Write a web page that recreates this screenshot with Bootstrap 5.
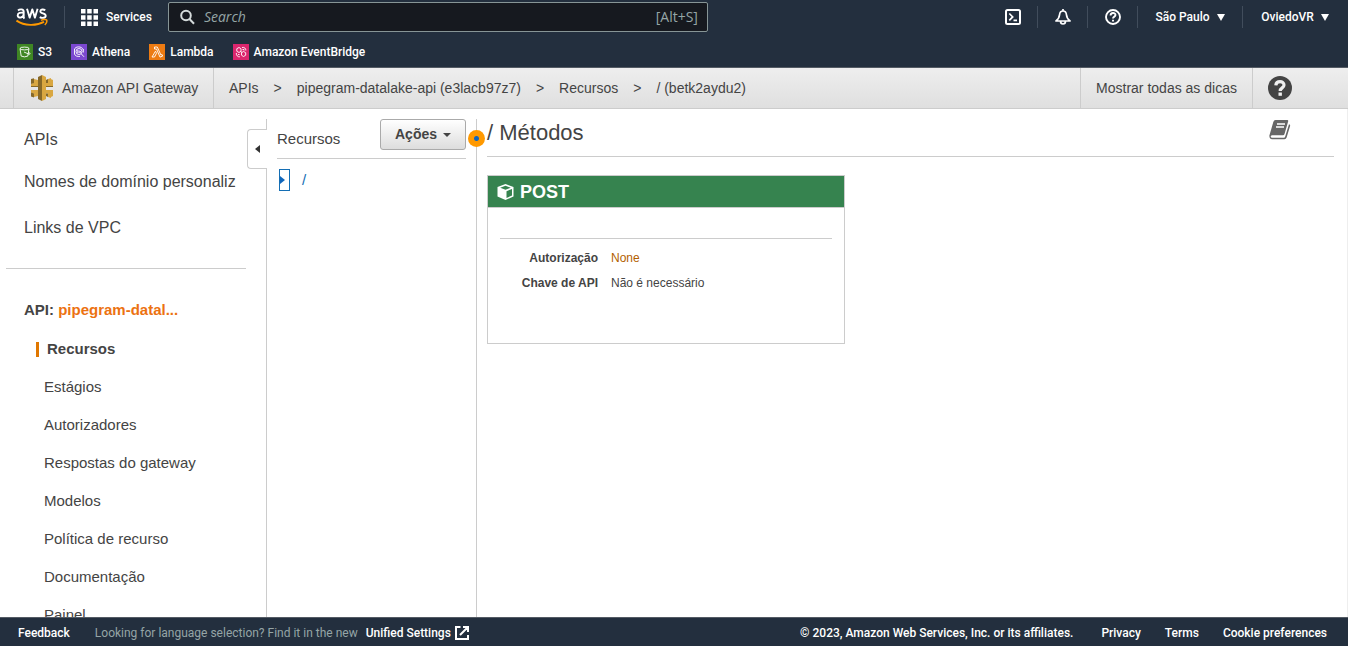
<!DOCTYPE html>
<html lang="pt-BR">
<head>
<meta charset="utf-8">
<meta name="viewport" content="width=device-width, initial-scale=1">
<title>API Gateway</title>
<link href="https://cdn.jsdelivr.net/npm/bootstrap@5.3.0/dist/css/bootstrap.min.css" rel="stylesheet">
<style>
body{font-family:"Liberation Sans",Arial,sans-serif;font-size:15px;line-height:20px;color:#444;background:#fff}
a{color:inherit;text-decoration:none}
.aws-bar{background:#232f3e;color:#fff;font:500 12px/16px Roboto,"Open Sans",sans-serif}
.aws-bar .btn{font:inherit;color:inherit;border:0;border-radius:0;padding:0}
.top-bar{border-bottom:1px solid #545b64}
.top-row{height:34px;padding-right:1px}
.fav-row{height:33px;padding:2px 0 0 17px;gap:19px}
.fav-row a{gap:5px}
.logo-cell{width:64px;padding-left:16px;padding-bottom:2px}
.vr-line{width:1px;height:22px;background:#414d5c}
.search-box{width:540px;height:30px;background:#16191f;border:1px solid #879596;border-radius:2px;color:#95a5a6;font:14px/16px "Open Sans",sans-serif;padding:0 9px 0 11px;gap:9px}
.search-box input{background:none;border:0;outline:0;font:inherit;font-style:italic;padding:0;color:inherit;min-width:0}
.search-box input::placeholder{color:#95a5a6;opacity:1}
.search-box kbd{background:none;color:inherit;font:inherit;padding:0}
.cell-icon{width:49px}
.region-btn{width:104px}
.user-btn{width:104px}
.top-bar .caret{width:0;height:0;border:4px solid transparent;border-top:7px solid #fff;border-bottom:0;margin-left:7px}
.crumb-bar{height:41px;font-size:14px;background:linear-gradient(#eee,#dfdfdf);border-bottom:1px solid #ccc;padding-left:13px}
.svc-cell{width:201px;border:1px solid #ccc;border-width:0 1px;padding-left:15px;gap:7px}
.crumbs{padding-left:15px;gap:15px}
.tips-cell{border:1px solid #ccc;border-width:0 1px;width:173px}
.help-cell{width:95px;padding-left:15px}
.work-area{border-right:1px solid #eee;padding-top:10px}
.side-col{width:267px;border-right:1px solid #ccc;padding-left:6px;position:relative}
.side-links a{display:block;font-size:16px;height:20px;padding-left:18px;width:230px;overflow:hidden;white-space:nowrap}
.side-links{padding:11px 0 30px;width:240px;border-bottom:1px solid #ccc}
.side-links li + li{margin-top:22px}
.side-links li + li + li{margin-top:26px}
.api-name{padding:31px 0 0 18px;font-weight:bold}
.api-name a{color:#ec7211}
.api-nav{padding:19px 0 0 38px}
.api-nav li{height:20px;margin-bottom:18px}
.api-nav .here{font-weight:bold;border-left:3px solid #e07700;height:15px;line-height:14px;margin:3px 0 20px -8px;padding-left:8px}
.fold-tab{position:absolute;right:-1px;top:10px;width:20px;height:40px;background:#fff;border:1px solid #ccc;border-right:0;border-radius:4px 0 0 4px;padding:0}
.tree-col{width:210px;border-right:1px solid #ccc;position:relative;padding:0 10px}
.tree-head{height:40px;border-bottom:1px solid #ccc}
.act-btn{width:86px;height:31px;font-size:14px;font-weight:bold;line-height:16px;color:#444;border:1px solid #aaa;border-radius:3px;background:linear-gradient(#fff,#ddd);padding:0 0 2px}
.act-btn::after{margin-left:6px;vertical-align:2px;border-top-width:4px;border-left-width:4px;border-right-width:4px}
.tree-row{padding:10px 0 0 2px;gap:12px;color:#146eb4}
.tree-toggle{width:11px;height:22px;border:1px solid #146eb4;background:#fff;padding:0;display:flex;align-items:center}
.split-dot{position:absolute;right:-9px;top:11px;width:17px;height:17px;border-radius:50%;border:0;padding:0;background:radial-gradient(circle,#1166bb 0 2px,#ff9900 3px)}
.detail-col{padding:0 13px 0 10px}
.detail-head{height:38px;border-bottom:1px solid #ccc;padding:1px 43px 0 0}
.detail-head h1{font-size:22px;line-height:26px;margin:0;font-weight:normal}
.method-box{width:358px;height:169px;margin-top:18px;border:1px solid #ccc}
.method-box h2{margin:0;height:32px;background:#36834f;border-bottom:1px solid #ccc;color:#fff;font-size:18px;line-height:20px;font-weight:bold;padding-left:9px;gap:6px}
.method-info{margin:30px 12px 0;border-top:1px solid #ccc;padding-top:7px;font-size:12px;line-height:25px}
.method-info th{width:98px;text-align:right;padding:0}
.method-info td{padding:0 0 0 13px}
.method-info a{color:#b35f00}
.foot-bar{height:29px;border-top:1px solid #545b64;padding:1px 21px 0 18px}
.foot-note{font-weight:400;color:#95a5a6;margin-left:25px}
</style>
</head>
<body class="vh-100 d-flex flex-column overflow-hidden">
<header class="aws-bar top-bar flex-shrink-0">
  <div class="top-row d-flex align-items-center">
    <div class="logo-cell"><a href="#" aria-label="AWS">
      <svg width="32" height="21" viewBox="0 0 32 21" fill="none" class="d-block">
        <g stroke="#fff" stroke-width="1.9"><path d="M2 4.5C3.6 3 7.7 2.6 7.7 5.8V11q0 .8.7 1.6M7.6 6.8C4.7 6.2 1.7 6.8 1.7 9.400 1.700 12.600 7.600 12.400 7.700 8"/><path d="M11 2.800 13.700 11.600 16.300 3.400 18.900 11.600 21.600 2.800" stroke-linejoin="round"/><path d="M29.300 4.200C27.400 3 24.300 3.100 24.300 5.300 24.300 8 29.700 6.900 29.700 9.700 29.700 12.200 26 12.300 23.700 11.100"/></g>
        <path d="M.5 14.600C8.500 20 20 20.200 28 15.900" stroke="#f90" stroke-width="1.900"/><path d="M25 14.400C27 13.100 30 13.200 30.700 14 31 15 30.300 17.600 28.800 19" stroke="#f90" stroke-width="1.500"/>
      </svg></a></div>
    <div class="vr-line"></div>
    <button class="btn d-flex align-items-center px-3" type="button">
      <svg class="me-2" width="17" height="17" viewBox="0 0 17 17" fill="#fff"><path d="M0 0h4.500v4.500H0zM6.200 0h4.500v4.500H6.200zM12.500 0H17v4.500h-4.500zM0 6.200h4.500v4.500H0zM6.200 6.200h4.500v4.500H6.200zM12.500 6.200H17v4.500h-4.500zM0 12.500h4.500V17H0zM6.200 12.500h4.500V17H6.200zM12.500 12.500H17V17h-4.500z"/></svg>Services
    </button>
    <label class="search-box d-flex align-items-center">
      <svg width="15" height="16" viewBox="0 0 15 16" fill="none" stroke="#d5dbdb" stroke-width="2"><circle cx="6" cy="6.500" r="4.800"/><path d="m9.500 10 4.500 4.800"/></svg>
      <input class="flex-fill" type="search" placeholder="Search" aria-label="Search"><kbd>[Alt+S]</kbd>
    </label>
    <div class="ms-auto d-flex align-items-center">
      <button class="btn cell-icon" type="button" aria-label="CloudShell"><svg width="16" height="16" viewBox="0 0 16 16" fill="none" stroke="#fff" stroke-width="2"><rect x="1" y="1" width="14" height="14" rx="1.500"/><path d="m4.300 4.500 3.400 3.400-3.400 3.400M8.500 11.300h3.500" stroke-width="1.700"/></svg></button>
      <div class="vr-line"></div>
      <button class="btn cell-icon" type="button" aria-label="Notifications"><svg width="16" height="16" viewBox="0 0 16 16" fill="none" stroke="#fff" stroke-width="1.700" stroke-linejoin="round"><path d="M8 0v2M1 12c2.400-1.800 3.300-3.600 3.600-6.500C4.800 3.300 6 2 8 2s3.200 1.300 3.400 3.500c.3 2.900 1.200 4.700 3.600 6.500zM5.500 12c0 1.800 1 3 2.500 3s2.500-1.200 2.500-3"/></svg></button>
      <div class="vr-line"></div>
      <button class="btn cell-icon" type="button" aria-label="Help"><svg width="16" height="16" viewBox="0 0 16 16" fill="none" stroke="#fff" stroke-width="1.900"><circle cx="8" cy="8" r="7"/><path d="M5.600 6.500C5.500 3.300 10.500 3.300 10.500 6.100 10.500 7.700 8 7.600 8 9.600M8 10.800v1.800"/></svg></button>
      <div class="vr-line"></div>
      <button class="btn region-btn d-flex align-items-center justify-content-center" type="button">São Paulo<span class="caret"></span></button>
      <div class="vr-line"></div>
      <button class="btn user-btn d-flex align-items-center justify-content-center" type="button">OviedoVR<span class="caret"></span></button>
    </div>
  </div>
  <nav class="fav-row d-flex align-items-center">
    <a href="#" class="d-flex align-items-center"><svg width="16" height="16" viewBox="0 0 16 16" fill="none" stroke="#fff" stroke-width=".9"><path fill="#3f8624" stroke="none" d="M0 0h16v16H0z"/><path d="m3 4.500 1.200 7.600q3.300 1.500 6.600 0L12 4.500"/><ellipse cx="7.500" cy="4.500" rx="4.500" ry="1.400"/><path d="m7 8 5 2.200q1.200.2 1-.7L11.500 8"/></svg>S3</a>
    <a href="#" class="d-flex align-items-center"><svg width="16" height="16" viewBox="0 0 16 16" fill="none" stroke="#fff" stroke-width=".9"><path fill="#7b48d0" stroke="none" d="M0 0h16v16H0z"/><circle cx="8" cy="7.500" r="3"/><path d="m10.200 9.800 2.800 3M6.800 6v3M8.200 6.500V9M9.400 7v1.700M12 5.500C11 2 4 2 3.500 5.500M3.500 5v5c.5 2 3 2.700 5.500 2.400M12.300 5v3.500"/></svg>Athena</a>
    <a href="#" class="d-flex align-items-center"><svg width="16" height="16" viewBox="0 0 16 16" fill="none" stroke="#fff" stroke-width=".9"><path fill="#ed7b12" stroke="none" d="M0 0h16v16H0z"/><path d="M5.500 3h2.800l3.600 8 1.200-.4.600 1.500-2.700 1L7.500 5H5.500zM6.500 7.200l1 2L5.500 13H3z"/></svg>Lambda</a>
    <a href="#" class="d-flex align-items-center"><svg width="16" height="16" viewBox="0 0 16 16" fill="none" stroke="#fff" stroke-width=".9"><path fill="#dc266e" stroke="none" d="M0 0h16v16H0z"/><path d="M6 3.500 3.800 4.700v2.600L6 8.500l2-1.200V4.700zM10.500 7.500l-2 1.200v2.500l2 1.300 2.200-1.300V8.700zM9 3.500c2.500-.5 4 1 3.800 3M3.300 9c-.1 2.500 1.400 4 3.600 3.800M8 7.300l.7 1.400M9.500 5.500h1.500v1M5 10.500h1.500"/></svg>Amazon EventBridge</a>
  </nav>
</header>

<div class="crumb-bar d-flex flex-shrink-0">
  <a href="#" class="svc-cell d-flex align-items-center">
    <svg width="26" height="26" viewBox="0 0 26 26"><path fill="#d9a741" d="M5 4l4 1v3h-4zM4 8h6v3.500H2V9zM2 15h8v3.500H4l-2-1zM5 18.500h4V21l-4 1zM16 8h6V4l2 1v6.500h-8zM19 4l3-1v5h-3zM16 15h8v6l-2 1v-3.500h-6zM19 18.500h3V23l-3-1z"/><path fill="#876929" d="M2 4l3-.8V8l-3 1zM2 17.500l3 1v4l-3-1zM2 11h8v1H2zM16 11h8v1h-8zM17 5l2-1v4h-2zM17 18.500h2V22l-2-1zM9 2l4-2v26l-4-2z"/><path fill="#d9a741" d="m13 0 4 2v22l-4 2z"/></svg>
    Amazon API Gateway
  </a>
  <nav class="crumbs d-flex align-items-center flex-fill text-nowrap" aria-label="Breadcrumb">
    <a href="#">APIs</a><span>&gt;</span><a href="#">pipegram-datalake-api (e3lacb97z7)</a><span>&gt;</span><a href="#">Recursos</a><span>&gt;</span><a href="#">/ (betk2aydu2)</a>
  </nav>
  <a href="#" class="tips-cell d-flex align-items-center justify-content-center text-nowrap">Mostrar todas as dicas</a>
  <a href="#" class="help-cell d-flex align-items-center" aria-label="Ajuda"><svg width="24" height="24" viewBox="0 0 24 24"><circle cx="12" cy="12" r="12" fill="#444"/><path d="M7.800 9.300C8.300 4.400 16 4.700 16 9c0 3-3.800 2.800-3.800 6" fill="none" stroke="#f0f0f0" stroke-width="3.200"/><path fill="#f0f0f0" d="M10.500 16.500h3.400v3.300h-3.400z"/></svg></a>
</div>

<main class="work-area d-flex flex-fill overflow-hidden">
  <aside class="side-col flex-shrink-0">
    <ul class="side-links list-unstyled mb-0">
      <li><a href="#">APIs</a></li><li><a href="#">Nomes de domínio personalizados</a></li><li><a href="#">Links de VPC</a></li>
    </ul>
    <div class="api-name">API: <a href="#">pipegram-datal...</a></div>
    <ul class="api-nav list-unstyled mb-0">
      <li class="here"><a href="#">Recursos</a></li>
      <li><a href="#">Estágios</a></li>
      <li><a href="#">Autorizadores</a></li>
      <li><a href="#">Respostas do gateway</a></li>
      <li><a href="#">Modelos</a></li>
      <li><a href="#">Política de recurso</a></li>
      <li><a href="#">Documentação</a></li>
      <li><a href="#">Painel</a></li>
    </ul>
    <button class="fold-tab d-flex align-items-center justify-content-center" type="button" aria-label="Recolher"><svg width="5" height="8" viewBox="0 0 5 8"><path fill="#333" d="M5 0v8L0 4z"/></svg></button>
  </aside>
  <section class="tree-col flex-shrink-0">
    <div class="tree-head d-flex justify-content-between align-items-center">
      <span>Recursos</span>
      <button class="btn act-btn dropdown-toggle align-self-start" type="button" data-bs-toggle="dropdown">Ações</button>
    </div>
    <div class="tree-row d-flex align-items-center">
      <button class="tree-toggle" type="button" aria-label="Expandir"><svg width="5" height="8" viewBox="0 0 5 8"><path fill="#1166bb" d="M0 0v8l5-4z"/></svg></button><a href="#">/</a>
    </div>
    <button class="split-dot" type="button" aria-label="Redimensionar"></button>
  </section>
  <section class="detail-col flex-fill">
    <div class="detail-head d-flex justify-content-between align-items-start">
      <h1>/ Métodos</h1>
      <a href="#" aria-label="Documentação"><svg width="22" height="20" viewBox="0 0 22 20" class="d-block"><path fill="#666" d="M6.500 0h11.800q1.200.2.900 1.300L15.500 14q-.4 1.200-1.500 1.200H3q-1.500.2-1.300 1.500.2 1 1.400 1H15q.8 0 1.100-.9L20 4.300q1.500.5 1.100 1.700L17.600 17.600Q17 19.300 15.500 19.300H3.200Q.2 19 .4 15.600L4.300 2Q4.900 0 6.500 0z"/><path d="M8 4h8M7 7h8" stroke="#fff" stroke-width="1.400"/></svg></a>
    </div>
    <article class="method-box">
      <h2 class="d-flex align-items-center"><svg width="17" height="16" viewBox="0 0 17 16"><path fill="#fff" d="M8.500 0 16.500 3v9.500l-8 3.500-8-3.500V3z"/><path fill="#36834f" d="m8.500 1.700 5.300 2-5.300 2-5.300-2zM9.500 7.200 15 5v6.600l-5.500 2.400z"/></svg>POST</h2>
      <div class="method-info">
        <table class="w-100">
          <tr><th scope="row">Autorização</th><td><a href="#">None</a></td></tr>
          <tr><th scope="row">Chave de API</th><td>Não é necessário</td></tr>
        </table>
      </div>
    </article>
  </section>
</main>

<footer class="aws-bar foot-bar d-flex align-items-center flex-shrink-0 text-nowrap">
  <a href="#">Feedback</a>
  <span class="foot-note">Looking for language selection? Find it in the new</span>
  <a href="#" class="ms-2 d-flex align-items-center">Unified Settings
    <svg class="ms-1" width="14" height="14" viewBox="0 0 14 14" fill="none" stroke="#fff" stroke-width="2"><path d="M5.500 1H1v12h12V9M8 1h5v5M13 1 5 9"/></svg></a>
  <span class="ms-auto">© 2023, Amazon Web Services, Inc. or its affiliates.</span>
  <a href="#" class="ms-4 ps-1">Privacy</a><a href="#" class="ms-4">Terms</a><a href="#" class="ms-4">Cookie preferences</a>
</footer>
<script src="https://cdn.jsdelivr.net/npm/bootstrap@5.3.0/dist/js/bootstrap.bundle.min.js"></script>
</body>
</html>
